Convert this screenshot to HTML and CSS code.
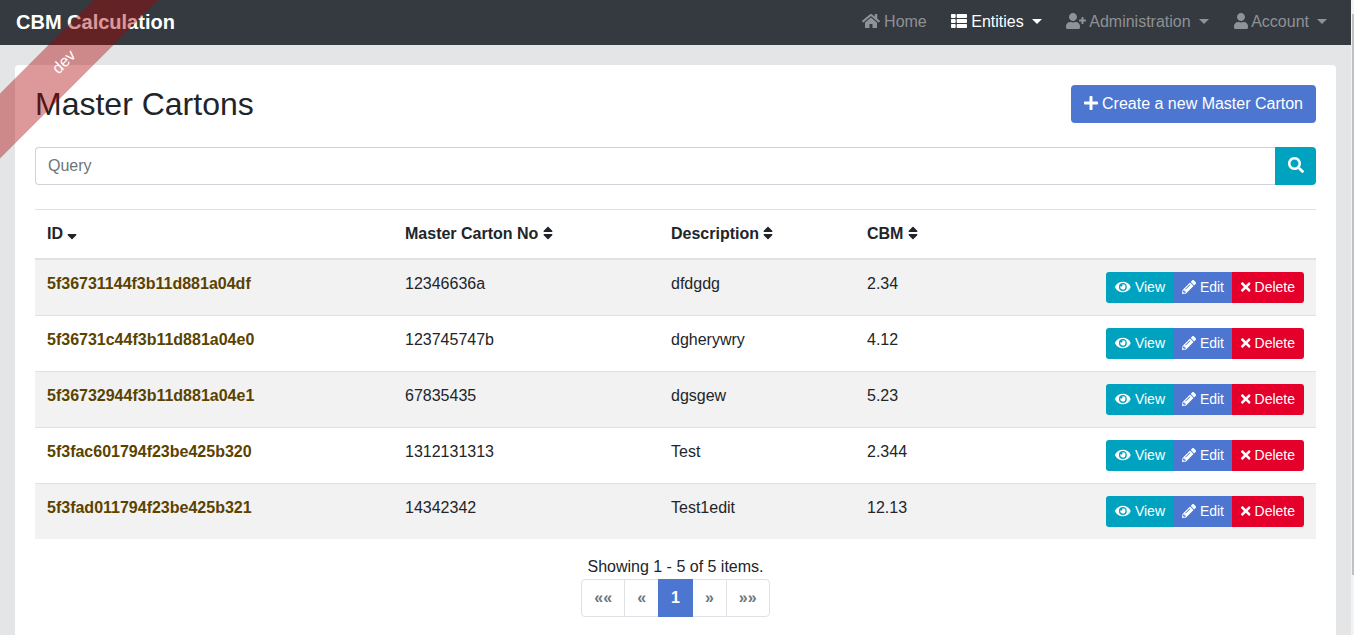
FILE: index.html
```html
<!DOCTYPE html>
<html lang="en">
<head>
    <meta charset="UTF-8">
    <meta name="viewport" content="width=device-width, initial-scale=1.0">
    <title>CBM Calculation</title>
    <link rel="stylesheet" href="styles.css">
</head>
<body>
    <svg class="sprite" xmlns="http://www.w3.org/2000/svg">
        <symbol id="i-home" viewBox="0 0 576 512"><path d="M280.37 148.26L96 300.11V464a16 16 0 0 0 16 16l112.06-.29a16 16 0 0 0 15.92-16V368a16 16 0 0 1 16-16h64a16 16 0 0 1 16 16v95.64a16 16 0 0 0 16 16.05L464 480a16 16 0 0 0 16-16V300L295.67 148.26a12.19 12.19 0 0 0-15.3 0zM571.6 251.47L488 182.56V44.05a12 12 0 0 0-12-12h-56a12 12 0 0 0-12 12v72.61L318.47 43a48 48 0 0 0-61 0L4.34 251.47a12 12 0 0 0-1.6 16.9l25.5 31A12 12 0 0 0 45.15 301l235.22-193.74a12.19 12.19 0 0 1 15.3 0L530.9 301a12 12 0 0 0 16.9-1.6l25.5-31a12 12 0 0 0-1.7-16.93z"/></symbol>
        <symbol id="i-list" viewBox="0 0 512 512"><path d="M149.333 216v80c0 13.255-10.745 24-24 24H24c-13.255 0-24-10.745-24-24v-80c0-13.255 10.745-24 24-24h101.333c13.255 0 24 10.745 24 24zM0 376v80c0 13.255 10.745 24 24 24h101.333c13.255 0 24-10.745 24-24v-80c0-13.255-10.745-24-24-24H24c-13.255 0-24 10.745-24 24zM125.333 32H24C10.745 32 0 42.745 0 56v80c0 13.255 10.745 24 24 24h101.333c13.255 0 24-10.745 24-24V56c0-13.255-10.745-24-24-24zm80 448H488c13.255 0 24-10.745 24-24v-80c0-13.255-10.745-24-24-24H205.333c-13.255 0-24 10.745-24 24v80c0 13.255 10.745 24 24 24zm-24-424v80c0 13.255 10.745 24 24 24H488c13.255 0 24-10.745 24-24V56c0-13.255-10.745-24-24-24H205.333c-13.255 0-24 10.745-24 24zm24 264H488c13.255 0 24-10.745 24-24v-80c0-13.255-10.745-24-24-24H205.333c-13.255 0-24 10.745-24 24v80c0 13.255 10.745 24 24 24z"/></symbol>
        <symbol id="i-user-plus" viewBox="0 0 640 512"><path d="M624 208h-64v-64c0-8.8-7.2-16-16-16h-32c-8.8 0-16 7.2-16 16v64h-64c-8.8 0-16 7.2-16 16v32c0 8.8 7.2 16 16 16h64v64c0 8.8 7.2 16 16 16h32c8.8 0 16-7.2 16-16v-64h64c8.8 0 16-7.2 16-16v-32c0-8.8-7.2-16-16-16zm-400 48c70.7 0 128-57.3 128-128S294.7 0 224 0 96 57.3 96 128s57.3 128 128 128zm89.6 32h-16.7c-22.2 10.2-46.9 16-72.9 16s-50.6-5.8-72.9-16h-16.7C60.2 288 0 348.2 0 422.4V464c0 26.5 21.5 48 48 48h352c26.5 0 48-21.5 48-48v-41.6c0-74.2-60.2-134.4-134.4-134.4z"/></symbol>
        <symbol id="i-user" viewBox="0 0 448 512"><path d="M224 256c70.7 0 128-57.3 128-128S294.7 0 224 0 96 57.3 96 128s57.3 128 128 128zm89.6 32h-16.7c-22.2 10.2-46.9 16-72.9 16s-50.6-5.8-72.9-16h-16.7C60.2 288 0 348.2 0 422.4V464c0 26.5 21.5 48 48 48h352c26.5 0 48-21.5 48-48v-41.6c0-74.2-60.2-134.4-134.4-134.4z"/></symbol>
        <symbol id="i-plus" viewBox="0 0 448 512"><path d="M416 208H272V64c0-17.67-14.33-32-32-32h-32c-17.67 0-32 14.33-32 32v144H32c-17.67 0-32 14.33-32 32v32c0 17.67 14.33 32 32 32h144v144c0 17.67 14.33 32 32 32h32c17.67 0 32-14.33 32-32V304h144c17.67 0 32-14.33 32-32v-32c0-17.67-14.33-32-32-32z"/></symbol>
        <symbol id="i-search" viewBox="0 0 512 512"><path d="M505 442.7L405.3 343c-4.5-4.5-10.6-7-17-7H372c27.6-35.3 44-79.7 44-128C416 93.1 322.9 0 208 0S0 93.1 0 208s93.1 208 208 208c48.3 0 92.7-16.4 128-44v16.3c0 6.4 2.5 12.5 7 17l99.7 99.7c9.4 9.4 24.6 9.4 33.9 0l28.3-28.3c9.4-9.4 9.4-24.6.1-34zM208 336c-70.7 0-128-57.2-128-128 0-70.7 57.2-128 128-128 70.7 0 128 57.2 128 128 0 70.7-57.2 128-128 128z"/></symbol>
        <symbol id="i-eye" viewBox="0 0 576 512"><path d="M572.52 241.4C518.29 135.59 410.93 64 288 64S57.68 135.64 3.48 241.41a32.35 32.35 0 0 0 0 29.19C57.71 376.41 165.07 448 288 448s230.32-71.64 284.52-177.41a32.35 32.35 0 0 0 0-29.19zM288 400a144 144 0 1 1 144-144 143.93 143.93 0 0 1-144 144zm0-240a95.31 95.31 0 0 0-25.31 3.79 47.85 47.85 0 0 1-66.9 66.9A95.78 95.78 0 1 0 288 160z"/></symbol>
        <symbol id="i-pencil" viewBox="0 0 512 512"><path d="M497.9 142.1l-46.1 46.1c-4.7 4.7-12.3 4.7-17 0l-111-111c-4.7-4.7-4.7-12.3 0-17l46.1-46.1c18.7-18.7 49.1-18.7 67.9 0l60.1 60.1c18.8 18.7 18.8 49.1 0 67.9zM284.2 99.8L21.6 362.4.4 483.9c-2.9 16.4 11.4 30.6 27.8 27.8l121.5-21.3 262.6-262.6c4.7-4.7 4.7-12.3 0-17l-111-111c-4.8-4.7-12.4-4.7-17.1 0zM124.1 339.9c-5.5-5.5-5.5-14.3 0-19.8l154-154c5.5-5.5 14.3-5.5 19.8 0s5.5 14.3 0 19.8l-154 154c-5.5 5.5-14.3 5.5-19.8 0zM88 424h48v36.3l-64.5 11.3-31.1-31.1L51.7 376H88v48z"/></symbol>
        <symbol id="i-times" viewBox="0 0 352 512"><path d="M242.72 256l100.07-100.07c12.28-12.28 12.28-32.19 0-44.48l-22.24-22.24c-12.28-12.28-32.19-12.28-44.48 0L176 189.28 75.93 89.21c-12.28-12.28-32.19-12.28-44.48 0L9.21 111.45c-12.28 12.28-12.28 32.19 0 44.48L109.28 256 9.21 356.07c-12.28 12.28-12.28 32.19 0 44.48l22.24 22.24c12.28 12.28 32.2 12.28 44.48 0L176 322.72l100.07 100.07c12.28 12.28 32.2 12.28 44.48 0l22.24-22.24c12.28-12.28 12.28-32.19 0-44.48L242.72 256z"/></symbol>
        <symbol id="i-sort" viewBox="0 0 320 512"><path d="M41 288h238c21.4 0 32.1 25.9 17 41L177 448c-9.4 9.4-24.6 9.4-33.9 0L24 329c-15.1-15.1-4.4-41 17-41zm255-105L177 64c-9.4-9.4-24.6-9.4-33.9 0L24 183c-15.1 15.1-4.4 41 17 41h238c21.4 0 32.1-25.9 17-41z"/></symbol>
        <symbol id="i-sort-down" viewBox="0 0 320 512"><path d="M41 288h238c21.4 0 32.1 25.9 17 41L177 448c-9.4 9.4-24.6 9.4-33.9 0L24 329c-15.1-15.1-4.4-41 17-41z"/></symbol>
    </svg>

    <div class="ribbon"><a href="#">dev</a></div>

    <nav class="navbar">
        <a class="brand" href="#">CBM Calculation</a>
        <ul class="nav-list">
            <li><a class="nav-link" href="#"><svg class="icon icon-home"><use href="#i-home"/></svg> Home</a></li>
            <li><a class="nav-link active caret" href="#"><svg class="icon icon-list"><use href="#i-list"/></svg> Entities</a></li>
            <li><a class="nav-link caret" href="#"><svg class="icon icon-user-plus"><use href="#i-user-plus"/></svg> Administration</a></li>
            <li><a class="nav-link caret" href="#"><svg class="icon icon-user"><use href="#i-user"/></svg> Account</a></li>
        </ul>
    </nav>

    <main class="card">
        <div class="page-head">
            <h2>Master Cartons</h2>
            <button class="btn btn-primary btn-create"><svg class="icon icon-plus"><use href="#i-plus"/></svg> Create a new Master Carton</button>
        </div>

        <form class="search">
            <input type="text" class="search-input" placeholder="Query">
            <button type="button" class="btn btn-info btn-search"><svg class="icon icon-search"><use href="#i-search"/></svg></button>
        </form>

        <table class="table">
            <colgroup>
                <col class="col-id">
                <col class="col-no">
                <col class="col-desc">
                <col class="col-cbm">
                <col>
            </colgroup>
            <thead>
                <tr>
                    <th>ID <svg class="icon icon-sort"><use href="#i-sort-down"/></svg></th>
                    <th>Master Carton No <svg class="icon icon-sort"><use href="#i-sort"/></svg></th>
                    <th>Description <svg class="icon icon-sort"><use href="#i-sort"/></svg></th>
                    <th>CBM <svg class="icon icon-sort"><use href="#i-sort"/></svg></th>
                    <th></th>
                </tr>
            </thead>
            <tbody>
                <tr>
                    <td><a class="row-link" href="#">5f36731144f3b11d881a04df</a></td>
                    <td>12346636a</td>
                    <td>dfdgdg</td>
                    <td>2.34</td>
                    <td class="actions"><div class="btn-group">
                        <button class="btn btn-sm btn-info"><svg class="icon icon-eye"><use href="#i-eye"/></svg> View</button>
                        <button class="btn btn-sm btn-primary"><svg class="icon"><use href="#i-pencil"/></svg> Edit</button>
                        <button class="btn btn-sm btn-danger"><svg class="icon icon-times"><use href="#i-times"/></svg> Delete</button>
                    </div></td>
                </tr>
                <tr>
                    <td><a class="row-link" href="#">5f36731c44f3b11d881a04e0</a></td>
                    <td>123745747b</td>
                    <td>dgherywry</td>
                    <td>4.12</td>
                    <td class="actions"><div class="btn-group">
                        <button class="btn btn-sm btn-info"><svg class="icon icon-eye"><use href="#i-eye"/></svg> View</button>
                        <button class="btn btn-sm btn-primary"><svg class="icon"><use href="#i-pencil"/></svg> Edit</button>
                        <button class="btn btn-sm btn-danger"><svg class="icon icon-times"><use href="#i-times"/></svg> Delete</button>
                    </div></td>
                </tr>
                <tr>
                    <td><a class="row-link" href="#">5f36732944f3b11d881a04e1</a></td>
                    <td>67835435</td>
                    <td>dgsgew</td>
                    <td>5.23</td>
                    <td class="actions"><div class="btn-group">
                        <button class="btn btn-sm btn-info"><svg class="icon icon-eye"><use href="#i-eye"/></svg> View</button>
                        <button class="btn btn-sm btn-primary"><svg class="icon"><use href="#i-pencil"/></svg> Edit</button>
                        <button class="btn btn-sm btn-danger"><svg class="icon icon-times"><use href="#i-times"/></svg> Delete</button>
                    </div></td>
                </tr>
                <tr>
                    <td><a class="row-link" href="#">5f3fac601794f23be425b320</a></td>
                    <td>1312131313</td>
                    <td>Test</td>
                    <td>2.344</td>
                    <td class="actions"><div class="btn-group">
                        <button class="btn btn-sm btn-info"><svg class="icon icon-eye"><use href="#i-eye"/></svg> View</button>
                        <button class="btn btn-sm btn-primary"><svg class="icon"><use href="#i-pencil"/></svg> Edit</button>
                        <button class="btn btn-sm btn-danger"><svg class="icon icon-times"><use href="#i-times"/></svg> Delete</button>
                    </div></td>
                </tr>
                <tr>
                    <td><a class="row-link" href="#">5f3fad011794f23be425b321</a></td>
                    <td>14342342</td>
                    <td>Test1edit</td>
                    <td>12.13</td>
                    <td class="actions"><div class="btn-group">
                        <button class="btn btn-sm btn-info"><svg class="icon icon-eye"><use href="#i-eye"/></svg> View</button>
                        <button class="btn btn-sm btn-primary"><svg class="icon"><use href="#i-pencil"/></svg> Edit</button>
                        <button class="btn btn-sm btn-danger"><svg class="icon icon-times"><use href="#i-times"/></svg> Delete</button>
                    </div></td>
                </tr>
            </tbody>
        </table>

        <div class="count">Showing 1 - 5 of 5 items.</div>
        <ul class="pagination">
            <li><a class="page-link" href="#">««</a></li>
            <li><a class="page-link" href="#">«</a></li>
            <li><a class="page-link current" href="#">1</a></li>
            <li><a class="page-link" href="#">»</a></li>
            <li><a class="page-link" href="#">»»</a></li>
        </ul>
    </main>

    <div class="scrollbar"><div class="scrollbar-thumb"></div></div>
</body>
</html>
```

FILE: styles.css
```css
html {
    height: 100%;
    overflow: hidden;
}
body {
    margin: 0;
    height: 100%;
    overflow: hidden;
    font-family: "Liberation Sans", Arial, sans-serif;
    font-size: 16px;
    line-height: 24px;
    color: #212529;
    background: #e4e5e6;
    box-sizing: border-box;
    padding-right: 3px;
}
a {
    text-decoration: none;
}
.sprite {
    display: none;
}
.icon {
    display: inline-block;
    height: 1em;
    width: 1em;
    fill: currentColor;
    vertical-align: -0.125em;
}
.icon-home { width: 1.125em; }
.icon-eye { width: 1.125em; }
.icon-user-plus { width: 1.25em; }
.icon-user { width: 0.875em; }
.icon-plus { width: 0.875em; }
.icon-times { width: 0.6875em; }
.icon-sort { width: 0.625em; }

/* ribbon over the top left corner */
.ribbon {
    position: absolute;
    top: 38.5px;
    left: -56px;
    z-index: 10;
    width: 240px;
    height: 46px;
    line-height: 46px;
    background: rgba(170, 0, 0, 0.4);
    text-align: center;
    transform: rotate(-45deg);
}
.ribbon a {
    color: #fff;
    font-size: 16px;
}

/* thin page scrollbar on the right edge */
.scrollbar {
    position: absolute;
    top: 0;
    right: 0;
    bottom: 0;
    width: 3px;
    background: #f3f3f3;
}
.scrollbar-thumb {
    width: 2px;
    height: 561px;
    margin: 14px 0 0 1px;
    background: #c1c1c1;
}

.navbar {
    display: flex;
    align-items: center;
    justify-content: space-between;
    box-sizing: border-box;
    height: 45px;
    padding: 0 16px 2px;
    background: #343a40;
}
.brand {
    color: #fff;
    font-size: 20px;
    font-weight: bold;
}
.nav-list {
    display: flex;
    gap: 8px;
    list-style: none;
    margin: 0;
    padding: 0;
}
.nav-list li:last-child {
    margin-left: 1px;
}
.nav-link {
    display: block;
    padding: 8px;
    color: rgba(255, 255, 255, 0.45);
}
.nav-link.active {
    color: #fff;
}
.caret::after {
    content: "";
    display: inline-block;
    margin-left: 8px;
    vertical-align: 3px;
    border-top: 5px solid;
    border-left: 5px solid transparent;
    border-right: 5px solid transparent;
}

.card {
    margin: 20px 15px 0;
    padding: 20px;
    background: #fff;
    border-radius: 4px;
}
.page-head {
    display: flex;
    justify-content: space-between;
    align-items: flex-start;
    height: 62px;
}
h2 {
    margin: 0;
    font-size: 32px;
    font-weight: 400;
    line-height: 38px;
}
.btn {
    border: 1px solid transparent;
    border-radius: 4px;
    color: #fff;
    font-family: inherit;
    font-size: 16px;
    line-height: 24px;
    padding: 6px 12px;
}
.btn-primary {
    background: #4d76d1;
}
.btn-info {
    background: #00a3bf;
}
.btn-danger {
    background: #e4002b;
}
.btn-sm {
    font-size: 14px;
    line-height: 21px;
    padding: 4px 8px;
    border-radius: 0;
}
.btn-create {
    white-space: nowrap;
}

.search {
    display: flex;
    height: 38px;
    margin-bottom: 24px;
}
.search-input {
    flex: 1;
    min-width: 0;
    box-sizing: border-box;
    height: 38px;
    padding: 6px 12px;
    border: 1px solid #ced4da;
    border-right: 0;
    border-radius: 4px 0 0 4px;
    font-family: inherit;
    font-size: 16px;
    color: #495057;
}
.search-input::placeholder {
    color: #6c757d;
}
.btn-search {
    width: 41px;
    padding: 0;
    border-radius: 0 4px 4px 0;
}

.table {
    width: 100%;
    border-collapse: collapse;
    table-layout: fixed;
}
.col-id { width: 358px; }
.col-no { width: 266px; }
.col-desc { width: 196px; }
.col-cbm { width: 200px; }
.table th {
    text-align: left;
    padding: 12px;
    border-top: 1px solid #dee2e6;
    border-bottom: 2px solid #dee2e6;
}
.table td {
    padding: 12px;
    border-top: 1px solid #dee2e6;
    vertical-align: top;
    height: 31px;
}
.table tbody tr:nth-child(odd) {
    background: #f2f2f2;
}
.row-link {
    color: #5a4300;
    font-weight: bold;
}
.actions {
    text-align: right;
}
.btn-group {
    display: inline-flex;
    vertical-align: top;
}
.btn-group .btn + .btn {
    margin-left: -1px;
}
.btn-group .btn:first-child {
    border-radius: 3px 0 0 3px;
}
.btn-group .btn:last-child {
    border-radius: 0 3px 3px 0;
}

.count {
    margin-top: 16px;
    text-align: center;
}
.pagination {
    display: flex;
    justify-content: center;
    list-style: none;
    margin: 0;
    padding: 0;
}
.pagination li + li {
    margin-left: -1px;
}
.page-link {
    display: block;
    padding: 6px 12px;
    border: 1px solid #dee2e6;
    background: #fff;
    color: #6c757d;
    font-weight: bold;
}
.pagination li:first-child .page-link {
    border-radius: 4px 0 0 4px;
}
.pagination li:last-child .page-link {
    border-radius: 0 4px 4px 0;
}
.page-link.current {
    position: relative;
    z-index: 1;
    background: #4d76d1;
    border-color: #4d76d1;
    color: #fff;
}
```
